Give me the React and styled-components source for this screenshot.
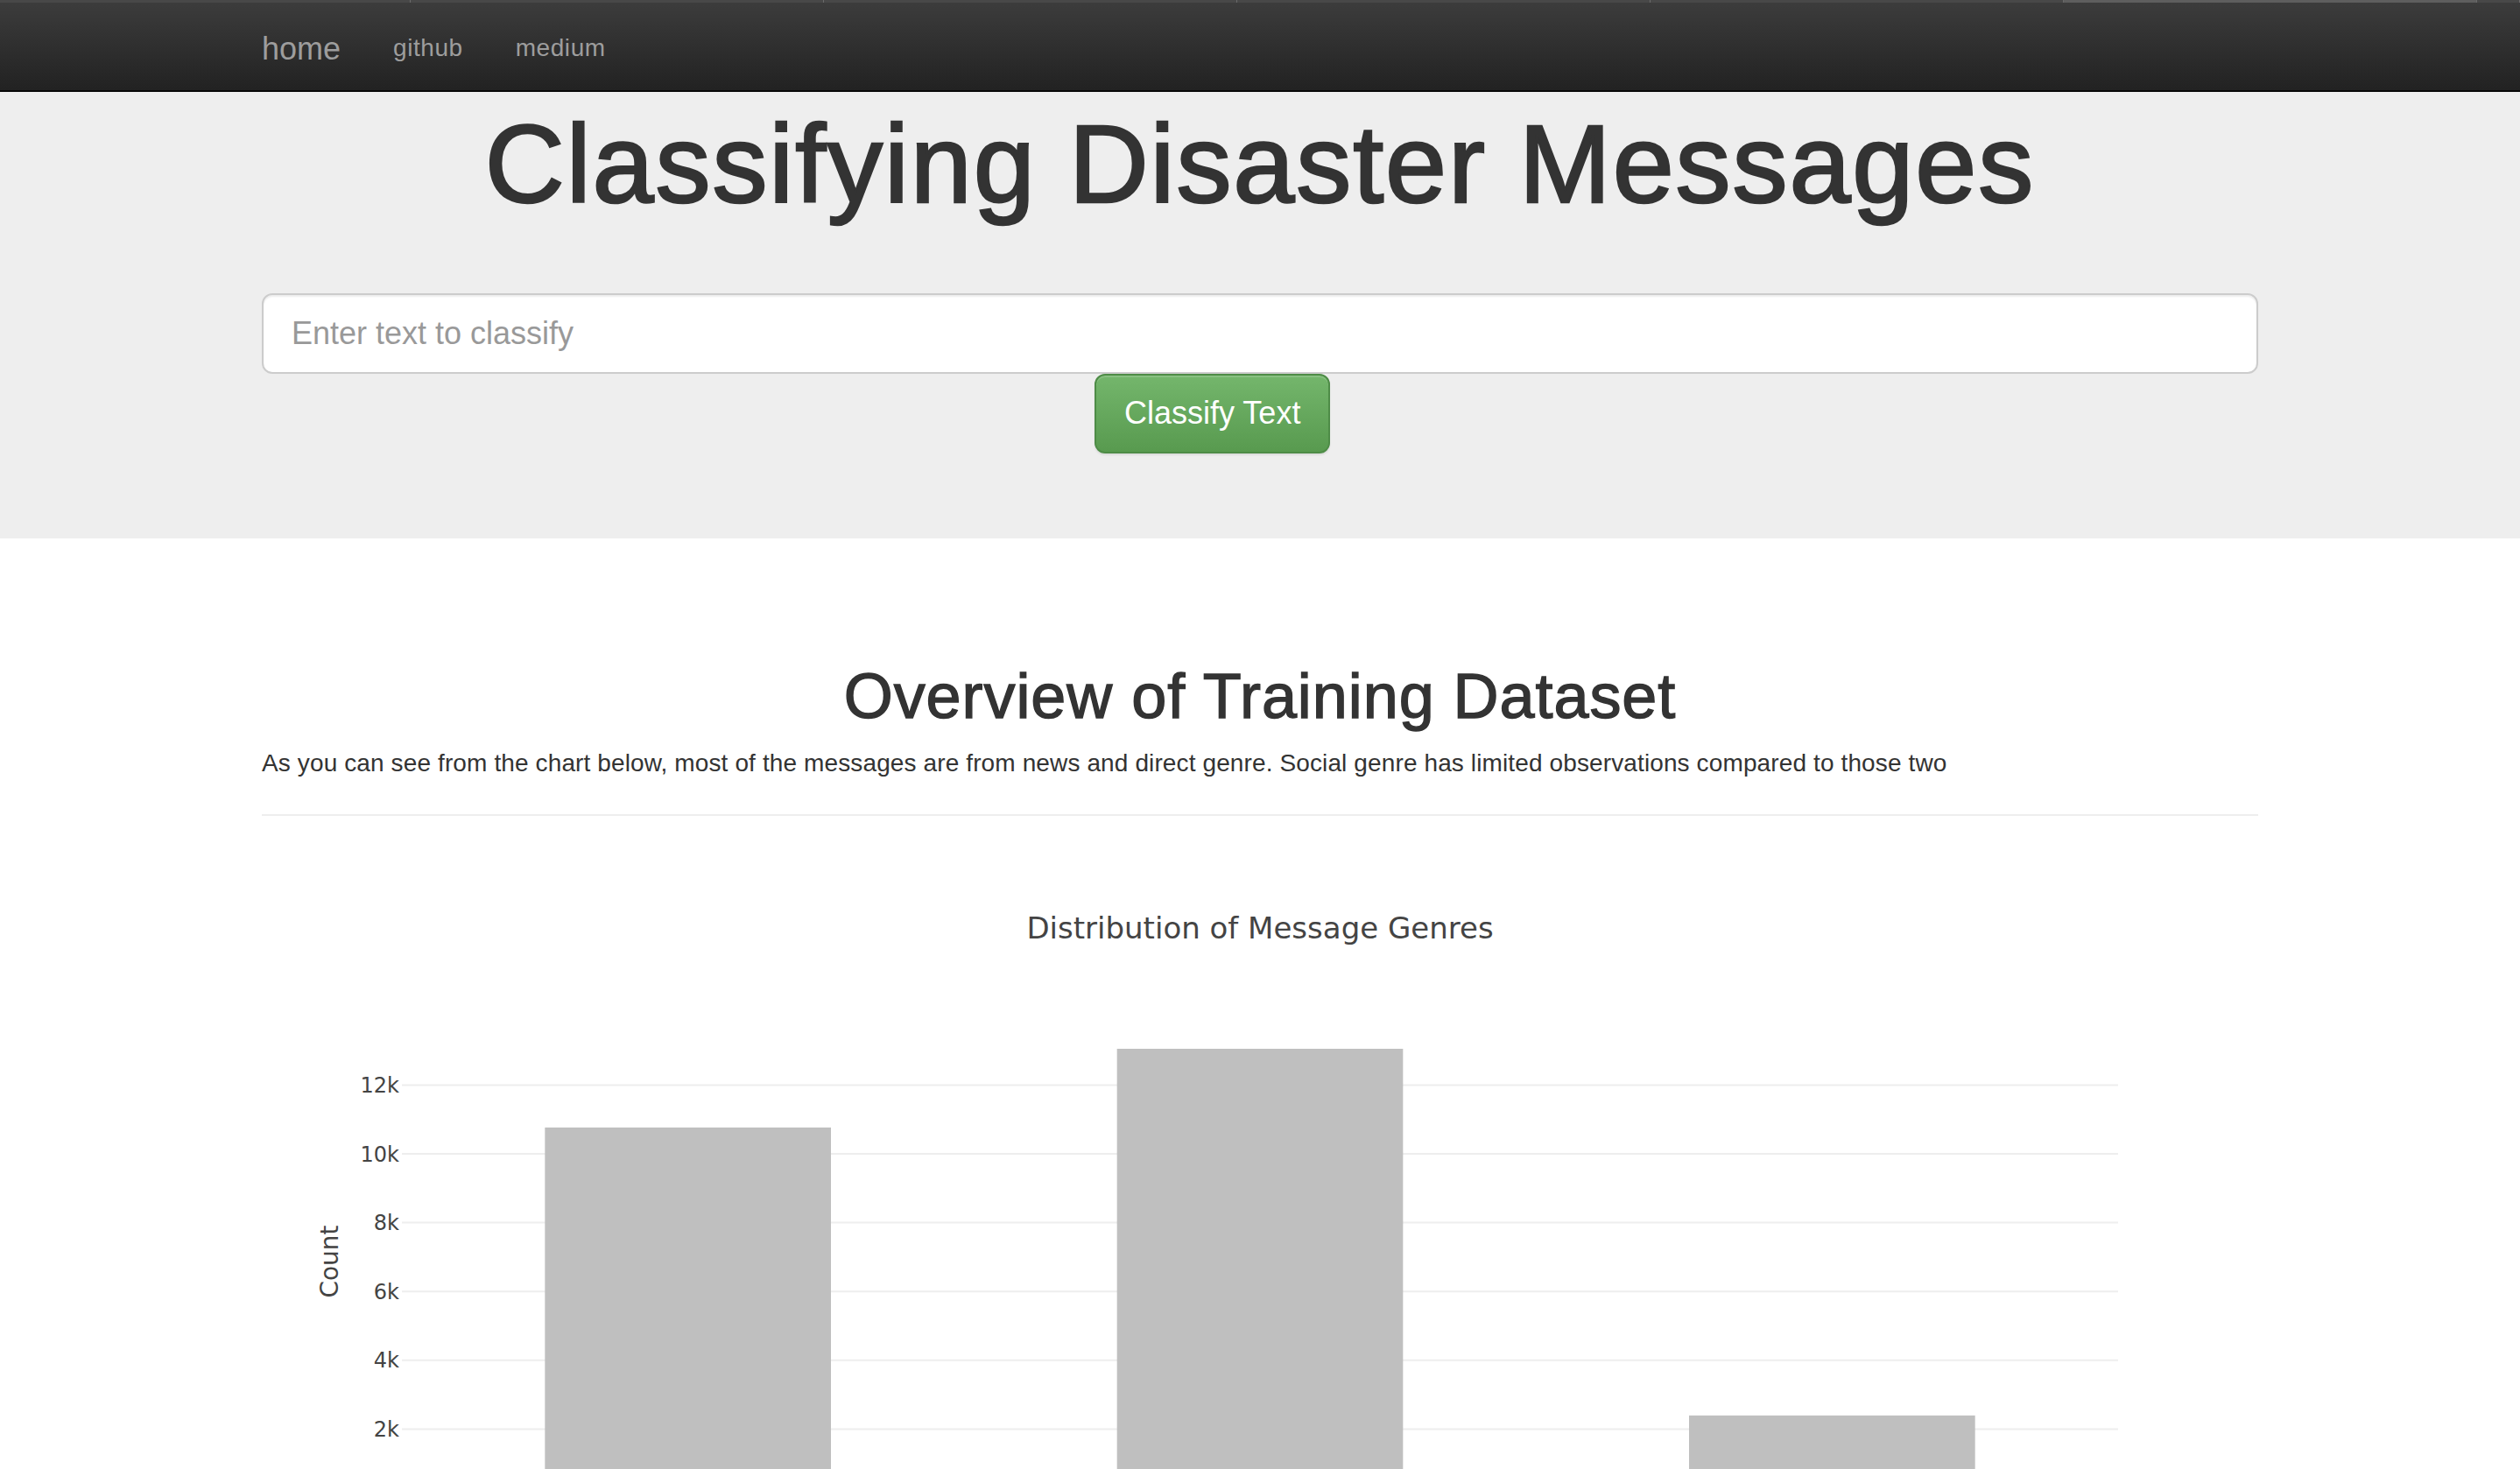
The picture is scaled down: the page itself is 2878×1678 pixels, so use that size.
import React from "react"
import styled, { createGlobalStyle } from "styled-components"

// page is drawn at 2x of a bootstrap 3 layout (1140px container -> 2280)

const GlobalStyle = createGlobalStyle`
  html, body {
    margin: 0;
    padding: 0;
    overflow: hidden;
    background: #fff;
  }
  body {
    font-family: "Liberation Sans", Arial, Helvetica, sans-serif;
    color: #333;
  }
  * { box-sizing: border-box; }
`

const genres = [
  { name: "direct", count: 10766 },
  { name: "news", count: 13054 },
  { name: "social", count: 2396 },
]

const TopStrip = styled.div`
  display: grid;
  grid-template-columns: 469px repeat(5, 472px) 1fr;
  height: 3px;
  background: #484848;
`

const StripTab = styled.div`
  border-right: 1px solid #6a6a6a;
  background: ${p => (p.$active ? "#5e5e5e" : "#484848")};
`

const Navbar = styled.nav`
  height: 102px;
  background: linear-gradient(to bottom, #3c3c3c 0%, #222 100%);
  border-bottom: 2px solid #080808;
`

const NavInner = styled.div`
  width: 2280px;
  margin: 0 auto;
  display: flex;
  align-items: flex-start;
`

const Brand = styled.a`
  display: block;
  padding: 33px 30px 27px 0;
  font-size: 36px;
  line-height: 40px;
  color: #9d9d9d;
  text-decoration: none;
`

const NavLink = styled.a`
  display: block;
  padding: 32px 30px 28px;
  font-size: 28px;
  line-height: 40px;
  letter-spacing: 0.02em;
  color: #9d9d9d;
  text-decoration: none;
`

const Jumbotron = styled.header`
  background: #eee;
  padding: 14px 0 97px;
`

const Container = styled.div`
  width: 2280px;
  margin: 0 auto;
`

const Title = styled.h1`
  margin: 0 0 77px;
  font-size: 126px;
  line-height: 1.1;
  font-weight: 400;
  letter-spacing: 0.015em;
  -webkit-text-stroke: 2.5px #333;
  text-align: center;
  color: #333;
`

const ClassifyInput = styled.input`
  display: block;
  width: 100%;
  height: 92px;
  padding: 20px 32px;
  font-family: inherit;
  font-size: 36px;
  color: #555;
  background: #fff;
  border: 2px solid #ccc;
  border-radius: 12px;
  box-shadow: inset 0 2px 2px rgba(0, 0, 0, 0.075);
  outline: none;

  &::placeholder {
    color: #999;
  }
`

const ButtonRow = styled.div`
  display: flex;
  padding-left: 951px;
`

const ClassifyButton = styled.button`
  height: 91px;
  padding: 0 32px;
  font-family: inherit;
  font-size: 36px;
  color: #fff;
  background: linear-gradient(to bottom, #74b66c 0%, #589a4f 100%);
  border: 2px solid #4e8c47;
  border-radius: 12px;
  box-shadow: inset 0 2px 0 rgba(255, 255, 255, 0.15), 0 2px 2px rgba(0, 0, 0, 0.075);
  cursor: pointer;
`

const Overview = styled.section`
  padding-top: 141px;
`

const SectionTitle = styled.h1`
  margin: 0 0 17px;
  font-size: 72px;
  line-height: 1.1;
  font-weight: 400;
  letter-spacing: 0.013em;
  -webkit-text-stroke: 1.4px #333;
  text-align: center;
  color: #333;
`

const Lead = styled.p`
  margin: 0;
  font-size: 28px;
  line-height: 40px;
  letter-spacing: 0.12px;
  color: #333;
`

const Divider = styled.hr`
  margin: 38px 0 39px;
  border: 0;
  border-top: 2px solid #eee;
`

const ChartBox = styled.div`
  width: 100%;
  height: 900px;

  svg {
    display: block;
    font-family: "DejaVu Sans", Verdana, sans-serif;
  }
`

// plotly-like bar chart, sizes in page px
const W = 2280
const H = 900
const M = { l: 160, r: 160, t: 200, b: 160 }
const yMax = 13741

function GenreChart({ data }) {
  const plotW = W - M.l - M.r
  const plotH = H - M.t - M.b
  const band = plotW / data.length
  const y = v => M.t + plotH - (v / yMax) * plotH
  const ticks = [2000, 4000, 6000, 8000, 10000, 12000]

  return (
    <ChartBox>
      <svg width={W} height={H} viewBox={`0 0 ${W} ${H}`}>
        <text x={W / 2} y={101} textAnchor="middle" fontSize="34" fill="#444">
          Distribution of Message Genres
        </text>
        {ticks.map(t => (
          <g key={t}>
            <line x1={M.l} x2={W - M.r} y1={y(t)} y2={y(t)} stroke="#eee" strokeWidth="2" />
            <text x={M.l - 3} y={y(t)} dy="0.36em" textAnchor="end" fontSize="24" fill="#444">
              {t / 1000}k
            </text>
          </g>
        ))}
        {data.map((d, i) => (
          <rect
            key={d.name}
            x={M.l + band * i + band / 4}
            y={y(d.count)}
            width={band / 2}
            height={M.t + plotH - y(d.count)}
            fill="#bfbfbf"
          />
        ))}
        <text
          transform={`translate(87, ${M.t + plotH / 2}) rotate(-90)`}
          textAnchor="middle"
          fontSize="28"
          fill="#444"
        >
          Count
        </text>
      </svg>
    </ChartBox>
  )
}

export default function App() {
  return (
    <>
      <GlobalStyle />
      <TopStrip>
        <StripTab />
        <StripTab />
        <StripTab />
        <StripTab />
        <StripTab />
        <StripTab $active />
        <StripTab />
      </TopStrip>
      <Navbar>
        <NavInner>
          <Brand href="#">home</Brand>
          <NavLink href="#">github</NavLink>
          <NavLink href="#">medium</NavLink>
        </NavInner>
      </Navbar>
      <Jumbotron>
        <Container>
          <Title>Classifying Disaster Messages</Title>
          <form onSubmit={e => e.preventDefault()}>
            <ClassifyInput type="text" placeholder="Enter text to classify" />
            <ButtonRow>
              <ClassifyButton type="submit">Classify Text</ClassifyButton>
            </ButtonRow>
          </form>
        </Container>
      </Jumbotron>
      <Container>
        <Overview>
          <SectionTitle>Overview of Training Dataset</SectionTitle>
          <Lead>
            As you can see from the chart below, most of the messages are from news and direct genre. Social genre has limited observations compared to those two
          </Lead>
          <Divider />
          <GenreChart data={genres} />
        </Overview>
      </Container>
    </>
  )
}
